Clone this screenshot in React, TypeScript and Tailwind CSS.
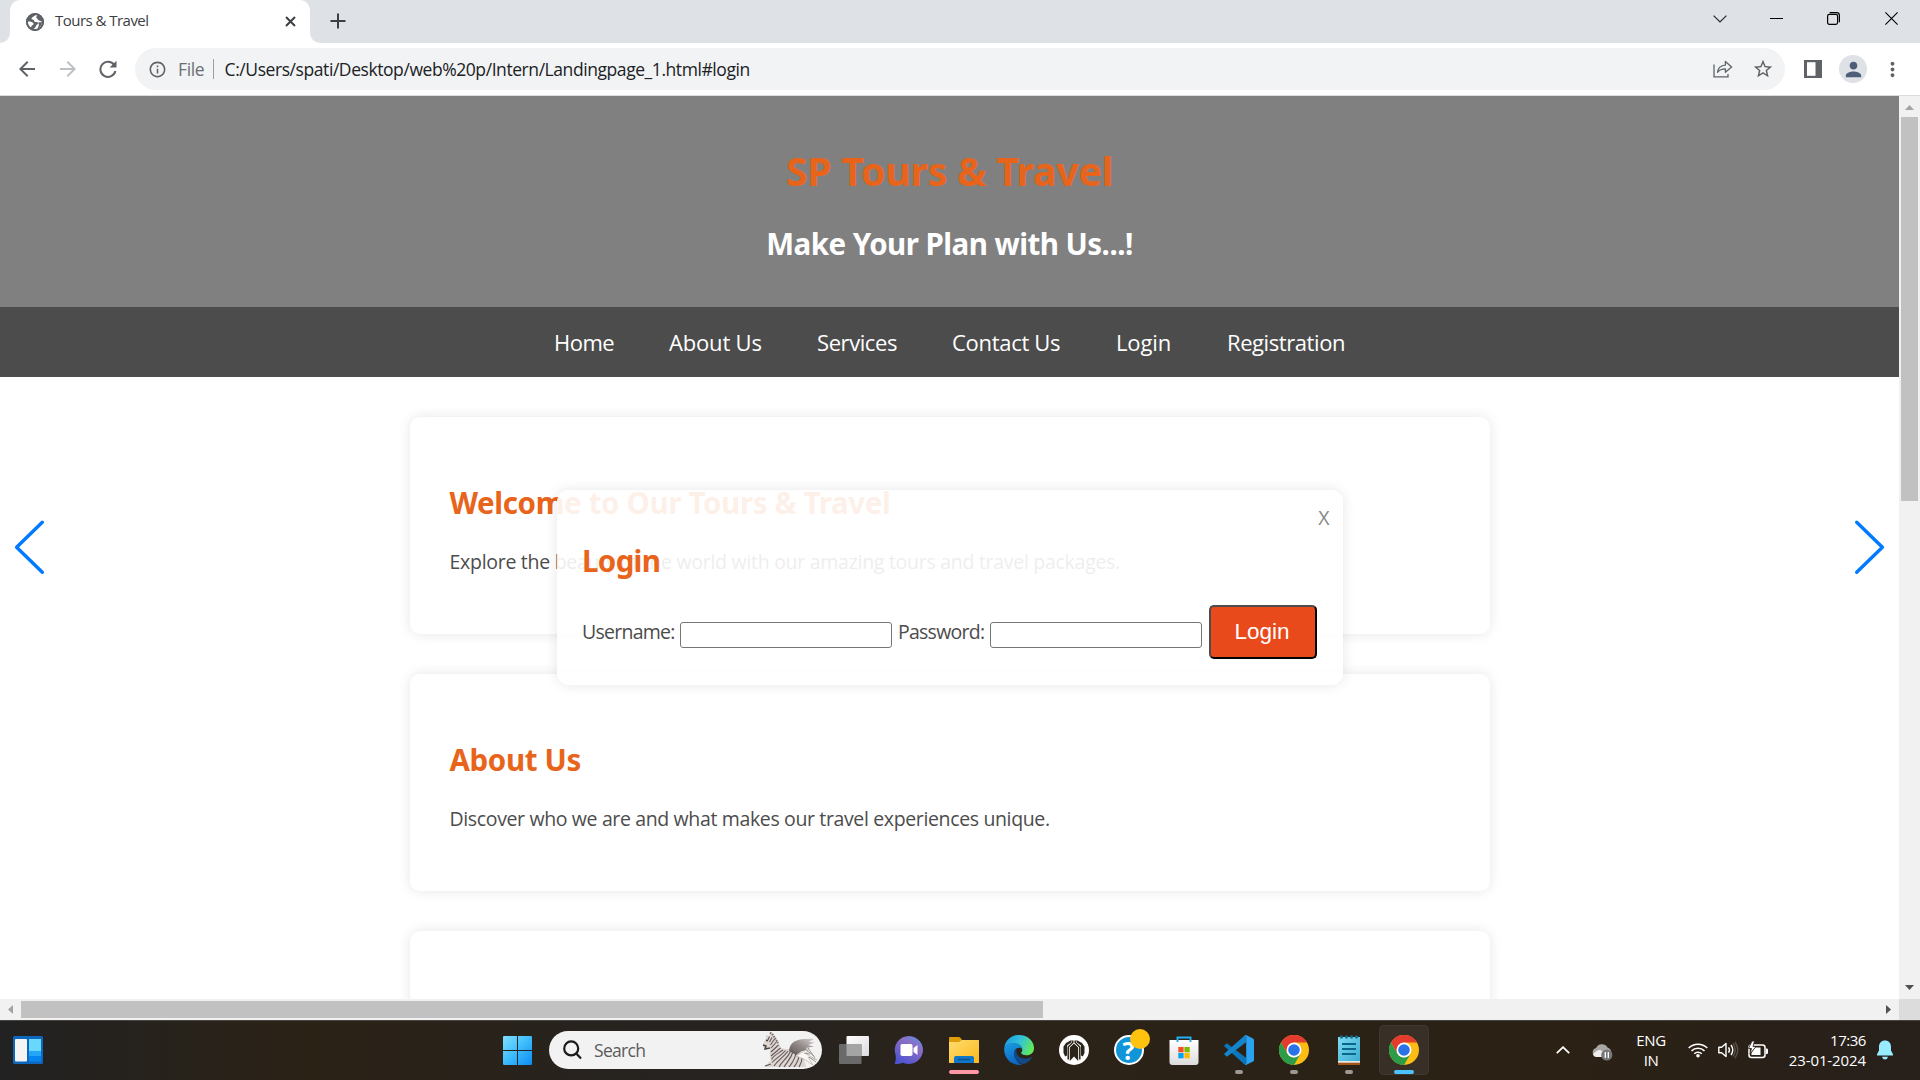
import React from 'react';
import { MdArrowBack, MdArrowForward, MdInfoOutline, MdStarBorder, MdPerson, MdMoreVert } from 'react-icons/md';

function GlobeIcon() {
  return (
    <svg width="18" height="18" viewBox="0 0 18 18">
      <circle cx="9" cy="9" r="9" fill="#5f6368" />
      <path d="M10.5 2C8.5 2.6 7.6 3.4 6.3 4.3C5.2 5.2 5.2 6.6 6.6 6.6C8 6.6 8 7.4 8.1 8C8.3 9 9.4 9 10.6 8.9C11.9 8.9 12.2 9.8 12 10.6C11.6 12 10.2 11.7 10 13C9.8 14.2 9 15 7.4 16L9.6 16.2C13.4 16 16.2 12.8 16.2 9C15 8.4 14 7.9 13 7.6C11.6 7.2 11.9 5.8 10.9 5.3C9.8 4.8 9.9 3.6 11.3 3.1Z" fill="#fff" />
      <path d="M1.8 8.6C3.8 8.5 6 9 7 9.8C8 10.6 7.6 12 6.4 12.2C5.4 12.4 5.4 13.6 5 14.6C2.9 13.3 1.7 11.3 1.8 8.6Z" fill="#fff" />
      <path d="M12.2 9.4C13.2 8.8 14.7 9.6 16.2 9C15.8 12 14 14.5 11.5 15.5C11.7 13.8 13.2 13.2 12.9 11.7Z" fill="#5f6368" />
      <circle cx="9" cy="9" r="8.1" fill="none" stroke="#5f6368" strokeWidth="1.8" />
    </svg>
  );
}

function TabStrip() {
  return (
    <div className="flex h-[43px] shrink-0 bg-[#dee1e6]">
      <div className="flex w-[10px] flex-col justify-end bg-white">
        <div className="h-full w-full rounded-br-[10px] bg-[#dee1e6]" />
      </div>
      <div className="bg-[#dee1e6]">
        <div className="flex h-[43px] w-[300px] items-center rounded-t-[10px] bg-white pr-[14.5px] pl-[16px]">
          <GlobeIcon />
          <span className="mt-[-2px] ml-[11px] flex-1 text-[15px] tracking-[-0.53px] text-[#3c4043]">Tours &amp; Travel</span>
          <svg width="11" height="11" viewBox="0 0 11 11" stroke="#3c4043" strokeWidth="2"><path d="M1 1L10 10M10 1L1 10" /></svg>
        </div>
      </div>
      <div className="w-[10px] bg-white"><div className="h-full rounded-bl-[10px] bg-[#dee1e6]" /></div>
      <svg className="mt-[13px] ml-[9.5px]" width="16" height="16" viewBox="0 0 16 16" stroke="#3c4043" strokeWidth="2"><path d="M8 0.5V15.5M0.5 8H15.5" /></svg>
      <svg className="mt-[15px] ml-auto" width="14" height="8" viewBox="0 0 14 8" fill="none" stroke="#222" strokeWidth="1.1"><path d="M0.6 0.6L7 7L13.4 0.6" /></svg>
      <svg className="mt-[18px] ml-[43px]" width="13" height="1" viewBox="0 0 13 1"><rect width="13" height="1" fill="#000" /></svg>
      <svg className="mt-[12px] ml-[44px]" width="13" height="13" viewBox="0 0 13 13" fill="none" stroke="#000" strokeWidth="1.2"><rect x="0.6" y="2.4" width="10" height="10" rx="1.8" /><path d="M2.6 0.6H9.6Q12.4 0.6 12.4 3.4V10.2" /></svg>
      <svg className="mt-[12px] mr-[22px] ml-[45px]" width="13" height="13" viewBox="0 0 13 13" stroke="#000" strokeWidth="1.1"><path d="M0.4 0.4L12.6 12.6M12.6 0.4L0.4 12.6" /></svg>
    </div>
  );
}

function Toolbar() {
  return (
    <div className="flex h-[53px] shrink-0 items-center border-b border-[#dadce0] bg-white">
      <MdArrowBack className="ml-[15px] size-6 text-[#5f6368]" />
      <MdArrowForward className="ml-[17px] size-6 text-[#bdc1c6]" />
      <svg className="ml-[19px]" width="18" height="18" viewBox="0 0 18 18"><path d="M15.2 4.9A7.6 7.6 0 1 0 16.4 11" fill="none" stroke="#5f6368" strokeWidth="2" /><path d="M17.5 0.8V7.6H10.6Z" fill="#5f6368" /></svg>
      <div className="ml-[18px] flex h-[42px] w-[1650px] items-center rounded-full bg-[#f1f3f4] pl-[13px]">
        <MdInfoOutline className="size-[19px] text-[#5f6368]" />
        <span className="ml-[11px] text-[17.5px] tracking-[-0.4px] text-[#6b6f74]">File</span>
        <div className="ml-[8.5px] h-[20px] w-[1.5px] bg-[#9aa0a6]" />
        <span className="ml-[10.5px] text-[17.5px] tracking-[-0.43px] text-[#202124]">C:/Users/spati/Desktop/web%20p/Intern/Landingpage_1.html#login</span>
        <svg className="ml-auto" width="20" height="18" viewBox="0 0 20 18" fill="none" stroke="#5f6368" strokeWidth="1.3"><path d="M1 4.5V16.8H15V14" /><path d="M4.5 12.3C5 8 7.6 5.4 12.4 5.1V1.5L18.6 7L12.4 12.3V8.8C8.8 8.7 6.5 9.8 4.5 12.3Z" strokeLinejoin="round" /></svg>
        <MdStarBorder className="mr-[11px] ml-[19px] size-[22px] text-[#5f6368]" />
      </div>
      <svg className="ml-[18.5px]" width="18" height="18" viewBox="0 0 18 18"><rect width="18" height="18" fill="#5f6368" /><rect x="3" y="2.2" width="8.5" height="13.6" fill="#fff" /></svg>
      <div className="ml-[17.5px] flex size-[28px] items-center justify-center rounded-full bg-[#dee1e6]"><MdPerson className="size-[23px] text-[#4e5d78]" /></div>
      <MdMoreVert className="ml-[14px] size-[23px] text-[#5f6368]" />
    </div>
  );
}

const navItems = [
  { label: 'Home', cls: 'w-[60px] tracking-[-0.5px]' },
  { label: 'About Us', cls: 'w-[93px] tracking-[-0.18px]' },
  { label: 'Services', cls: 'w-[80px] tracking-[-0.42px]' },
  { label: 'Contact Us', cls: 'w-[109px] tracking-[-0.3px]' },
  { label: 'Login', cls: 'w-[56px] tracking-[-0.14px]' },
  { label: 'Registration', cls: 'w-[118px] tracking-[-0.42px]' },
];

function Card({ title, text, titleCls, textCls }: { title?: string; text?: string; titleCls?: string; textCls?: string }) {
  return (
    <section className="h-[217px] w-[1080px] shrink-0 rounded-[10px] bg-white px-[40px] pt-[66px] shadow-[0_0_13px_rgba(0,0,0,0.1)]">
      <h2 className={`h-[40px] font-['Noto_Sans'] text-[29.5px] leading-[40px] font-bold whitespace-nowrap text-[#e8641b] ${titleCls}`}>{title}</h2>
      <p className={`mt-[25px] h-[27px] text-[19.5px] leading-[27px] whitespace-nowrap text-[#4c4c4c] ${textCls}`}>{text}</p>
    </section>
  );
}

function LoginDialog() {
  return (
    <div className="absolute top-[394px] left-[557px] h-[195px] w-[786px] rounded-[12px] bg-white/90 px-[25px] text-[19.5px] text-[#4c4c4c] shadow-[0_0_13px_rgba(0,0,0,0.1)]">
      <div className="flex h-[51px] items-start justify-end pt-[14px] leading-[27px] text-[#888]"><span className="mr-[-11.5px]">X</span></div>
      <h2 className="h-[40px] font-['Noto_Sans'] text-[29.5px] leading-[40px] font-bold tracking-[-0.65px] text-[#e8641b]">Login</h2>
      <div className="mt-[24px] flex h-[54px] items-center">
        <span className="w-[93px] tracking-[-0.75px]">Username:</span>
        <div className="mt-[6px] ml-[5px] h-[26px] w-[212px] rounded-[3px] border border-[#767676] bg-white" />
        <span className="ml-[6px] w-[87px] tracking-[-0.75px]">Password:</span>
        <div className="mt-[6px] ml-[5px] h-[26px] w-[212px] rounded-[3px] border border-[#767676] bg-white" />
        <div className="ml-[7px] flex h-[54px] w-[108px] shrink-0 items-center justify-center rounded-[5px] border-2 border-t-[#4d4d4d] border-r-black border-b-black border-l-[#4d4d4d] bg-[#e84a1b] pr-[2px] font-['Liberation_Sans'] text-[22.5px] text-white">Login</div>
      </div>
    </div>
  );
}

function SiteContent() {
  return (
    <main className="relative h-[903px] w-[1899px] overflow-hidden bg-white">
      <header className="h-[211px] bg-[#808080] pt-[49px] text-center font-['Noto_Sans'] font-bold">
        <h1 className="h-[53px] text-[39.5px] leading-[53px] tracking-[-0.4px] text-[#e8641b]">SP Tours &amp; Travel</h1>
        <h2 className="mt-[26px] h-[40px] text-[29.5px] leading-[40px] tracking-[-0.53px] text-white">Make Your Plan with Us...!</h2>
      </header>
      <nav className="flex h-[70px] justify-center gap-[55px] bg-[#4c4c4c] pt-[20px] text-[22px] leading-[31px] text-white">
        {navItems.map((n) => <a key={n.label} className={`whitespace-nowrap ${n.cls}`}>{n.label}</a>)}
      </nav>
      <div className="flex flex-col items-center gap-[40px] pt-[40px]">
        <Card title="Welcome to Our Tours & Travel" text="Explore the beauty of the world with our amazing tours and travel packages." titleCls="tracking-[-0.36px]" textCls="tracking-[-0.28px]" />
        <Card title="About Us" text="Discover who we are and what makes our travel experiences unique." titleCls="tracking-[-0.35px]" textCls="tracking-[-0.36px]" />
        <Card />
      </div>
      <svg className="absolute top-[423px] left-[14px]" width="32" height="56" viewBox="0 0 32 56" fill="none" stroke="#007aff" strokeWidth="3.4" strokeLinecap="round" strokeLinejoin="round"><path d="M28.3 3.2L2.6 28.2L28.3 53.2" /></svg>
      <svg className="absolute top-[423px] left-[1853px]" width="32" height="56" viewBox="0 0 32 56" fill="none" stroke="#007aff" strokeWidth="3.4" strokeLinecap="round" strokeLinejoin="round"><path d="M3.7 3.2L29.4 28.2L3.7 53.2" /></svg>
      <LoginDialog />
    </main>
  );
}

function ZebraArt() {
  return (
    <svg width="60" height="38" viewBox="0 0 60 38">
      <defs>
        <linearGradient id="wing" x1="1" y1="0" x2="0" y2="1"><stop offset="0" stopColor="#d8d2ce" /><stop offset="0.45" stopColor="#978e8e" /><stop offset="1" stopColor="#5c5455" /></linearGradient>
        <clipPath id="pill"><path d="M0 0H41A19 19 0 0 1 41 38H0Z" /></clipPath>
      </defs>
      <g clipPath="url(#pill)">
        <path d="M1 13L4 7L4 4L7 5L8 2L12 5C15 7 17 11 19 17C25 19 31 17 36 21C41 25 43 30 44 36H2L9 29C7 25 8 20 8 16L3 18L1 16Z" fill="#ded6d1" />
        <path d="M27 20C28 11 34 7 52 8L47 11L53 11.500L46 14L52 15.500L44 17L46 19.500L40 20L34 24Z" fill="url(#wing)" />
        <path d="M7.500 5.500L6 9M10 6.500L7.500 11M12.500 8L8.500 14M14.500 11L9 17M16.500 14L9 21M18.500 17L9 25M21 19C17 22 12 24 9.500 28.500M23.500 19.500C19 25 14 27 10 31.500M26 20C21 27 16 29 12 35M28.500 20C26 27 20 30 17 36M31 20.500C29 28 25 31 22 36M34 21.500C33 29 30 32 27 36M37 23.500C37 30 34 33 32 36M40 27C40 31 38 34 37 36M3 35L9 33" stroke="#62575a" strokeWidth="1.1" fill="none" />
        <path d="M1 14L4 15L3 18L8 17" stroke="#4c4341" strokeWidth="1.5" fill="none" />
        <path d="M8 1.500L11 4L13.500 8L16 12" stroke="#75675f" strokeWidth="2" strokeDasharray="1.500 1" fill="none" />
        <circle cx="5" cy="9.500" r="0.900" fill="#2c2422" />
        <path d="M34 25L47 17L44 23L55 29L46 26L51 34L42 28Z" fill="#fbf7f5" stroke="#b5aca7" strokeWidth="0.700" />
        <path d="M43 18L52 25M46 17L53 27M42 22L48 23M47 26L54 31" stroke="#958b87" strokeWidth="0.900" />
      </g>
    </svg>
  );
}

function ChromeIcon() {
  return (
    <svg width="30" height="30" viewBox="0 0 30 30">
      <circle cx="15" cy="15" r="15" fill="#fbbc14" />
      <path d="M2 7.5A15 15 0 0 1 28 7.5H15L8.5 18.7Z" fill="#e33b2e" />
      <path d="M2 7.5L8.5 18.8A7.5 7.5 0 0 0 15 22.5L21.5 18.7L15 30A15 15 0 0 1 2 7.5Z" fill="#2c9c48" />
      <circle cx="15" cy="15" r="7.5" fill="#fff" />
      <circle cx="15" cy="15" r="5.8" fill="#2a72e8" />
    </svg>
  );
}

function StartIcon() {
  return (
    <svg width="29" height="29" viewBox="0 0 29 29">
      <defs><linearGradient id="win" x1="0" y1="0" x2="1" y2="1"><stop stopColor="#80e0ff" /><stop offset="0.5" stopColor="#3cbcfc" /><stop offset="1" stopColor="#0d8bf5" /></linearGradient></defs>
      <path d="M0.8 0H14V14H0V0.8ZM15 0H28.2L29 0.8V14H15ZM0 15H14V29H0.8L0 28.2ZM15 15H29V28.2L28.2 29H15Z" fill="url(#win)" />
    </svg>
  );
}

function TaskViewIcon() {
  return (
    <svg width="30" height="28" viewBox="0 0 30 28">
      <defs><linearGradient id="tv" x1="0" y1="0" x2="1" y2="1"><stop stopColor="#fff" /><stop offset="1" stopColor="#dcdcdc" /></linearGradient></defs>
      <rect x="7.5" y="0" width="22.5" height="20" rx="1" fill="url(#tv)" />
      <rect x="0" y="8" width="22.5" height="20" rx="1" fill="#6a6a6a" />
      <path d="M7.5 8H22.5V20H7.5Z" fill="#a4a4a4" />
    </svg>
  );
}

function ChatIcon() {
  return (
    <svg width="30" height="30" viewBox="0 0 30 30">
      <defs><linearGradient id="chat" x1="0.9" y1="0" x2="0.3" y2="1"><stop stopColor="#5d8fe8" /><stop offset="0.35" stopColor="#8a6fc4" /><stop offset="1" stopColor="#5053d0" /></linearGradient></defs>
      <path d="M15 1A14.2 14 0 1 1 9 27.8C7 28.6 4 29 0.6 29C1.6 26.7 2 24 1.7 20A14.2 14 0 0 1 15 1Z" fill="url(#chat)" />
      <rect x="6.5" y="9" width="12" height="12" rx="1.8" fill="#fff" /><path d="M19.5 13L23.5 10V20L19.5 17Z" fill="#fff" />
    </svg>
  );
}

function ExplorerIcon() {
  return (
    <svg width="30" height="28" viewBox="0 0 30 28">
      <defs><linearGradient id="fold" x1="0" y1="0" x2="1" y2="1"><stop stopColor="#ffdc70" /><stop offset="1" stopColor="#fbb91c" /></linearGradient></defs>
      <path d="M0 2Q0 1 1 1H10Q11 1 12 2.5L13 4H29Q30 4 30 5V16H0Z" fill="#e09d0a" />
      <path d="M0 6H10L13 4H29Q30 4 30 5V27H0Z" fill="url(#fold)" />
      <path d="M5 27V22Q5 20 7 20H23Q25 20 25 22V27Z" fill="#0f77c9" /><path d="M9 23.5H21" stroke="#075192" strokeWidth="1.5" />
    </svg>
  );
}

function EdgeIcon() {
  return (
    <svg width="30" height="30" viewBox="0 0 30 30">
      <defs>
        <linearGradient id="e1" x1="0" y1="0.3" x2="1" y2="0.6"><stop stopColor="#1b9de2" /><stop offset="0.5" stopColor="#33c3d8" /><stop offset="1" stopColor="#66eb52" /></linearGradient>
        <linearGradient id="e2" x1="0" y1="0" x2="0.3" y2="1"><stop stopColor="#1b9de2" /><stop offset="1" stopColor="#0b67c4" /></linearGradient>
      </defs>
      <path d="M0.3 12.5C1.3 5 7.5 0 15 0C24 0 30 6.3 30 13C30 17.8 26.5 20.3 22.5 20.3C19.3 20.3 17.2 19.2 17.2 17.8C17.2 17 18.3 16.5 18.3 14.7C18.3 11 14 8.2 9.5 8.2C5.5 8.2 2.2 10 0.3 12.5Z" fill="url(#e1)" />
      <path d="M0.3 12.5C2.2 9.5 5.5 8 9.3 8C14 8 17.8 10.7 18.3 14C16.5 12.4 14.2 12.5 12.5 13.6C9.5 16 9.3 20 11.8 24C13.2 27 15.5 29.3 18.2 29.7C8 31.5 -1 23.5 0.3 12.5Z" fill="url(#e2)" />
      <path d="M12.5 13.6C9 16 9.3 20.5 11.8 24.5C15 29 19.5 31 25 26C27 24.4 27.8 23 28 21.7C22 25.5 13.5 24 12.4 17.3C12.2 16 12.2 14.8 12.5 13.6Z" fill="#114a8b" />
    </svg>
  );
}

function TunnelIcon() {
  return (
    <svg width="30" height="30" viewBox="0 0 30 30">
      <circle cx="15" cy="15" r="15" fill="#fff" />
      <path d="M6.2 21.500L4.500 18V11.500L7 8L12.500 5V7.200L8 10.500V20.500ZM23.800 21.500L25.500 18V11.500L23 8L17.500 5V7.200L22 10.500V20.500Z" fill="#2b2419" />
      <path d="M9.200 24.500V12L13.800 7.500V5.500M20.800 24.500V12L16.200 7.500V5.500" fill="none" stroke="#2b2419" strokeWidth="1.500" />
      <path d="M10.800 26V12.500L15 8.500L19.200 12.500V26L15 21.500Z" fill="#2b2419" /><path d="M12 22.800V13L15 10.200L18 13V22.800L15 19.800Z" fill="#2b2419" />
    </svg>
  );
}

function HelpIcon() {
  return (
    <div className="relative size-[30px]">
      <div className="flex size-[30px] items-center justify-center rounded-full border-2 border-white bg-[#0f95d8] text-[25px] leading-none font-bold text-white">?</div>
      <div className="absolute top-[-6px] left-[16px] size-[20px] rounded-full bg-[#ffc20e]" />
    </div>
  );
}

function StoreIcon() {
  return (
    <svg width="30" height="30" viewBox="0 0 30 30">
      <defs><linearGradient id="bag" x1="0" y1="0" x2="0" y2="1"><stop stopColor="#fff" /><stop offset="1" stopColor="#dcdcdc" /></linearGradient></defs>
      <path d="M0.5 5H29.5V27Q29.5 30 26.5 30H3.5Q0.5 30 0.5 27Z" fill="url(#bag)" />
      <rect x="9.3" y="12" width="5.3" height="5.3" fill="#f25022" /><rect x="15.4" y="12" width="5.3" height="5.3" fill="#7fba00" />
      <rect x="9.3" y="18" width="5.3" height="5.3" fill="#00a4ef" /><rect x="15.4" y="18" width="5.3" height="5.3" fill="#ffb900" />
      <path d="M8.5 7V2.5H21.5V7" fill="none" stroke="#23aef0" strokeWidth="2" />
    </svg>
  );
}

function CodeIcon() {
  return (
    <svg width="30" height="30" viewBox="0 0 30 30">
      <path d="M0.4 10.6L2.5 8.6Q3 8.3 3.6 8.7L22 22.8V30Q21 30 20.3 29.3L0.5 11.6Q0 11 0.4 10.6Z" fill="#0b76bc" />
      <path d="M0.4 19.4L2.5 21.4Q3 21.7 3.6 21.3L22 7.2V0Q21 0 20.3 0.7L0.5 18.4Q0 19 0.4 19.4Z" fill="#1484cc" />
      <path d="M22 0L29 3.4Q30 4 30 5V25Q30 26 29 26.6L22 30Q21 30 20.3 29.3Q22.2 30.3 22.2 28V2Q22.2 -0.2 20.3 0.7Q21 -0.1 22 0Z" fill="#2aa3f0" />
    </svg>
  );
}

function NotepadIcon() {
  return (
    <svg width="22" height="30" viewBox="0 0 22 30">
      <defs><linearGradient id="np" x1="0" y1="0" x2="1" y2="1"><stop stopColor="#7fdcf2" /><stop offset="1" stopColor="#3bacd0" /></linearGradient></defs>
      <rect y="27" width="22" height="3" fill="#a4541a" /><rect y="25.5" width="22" height="2.2" fill="#e8e8e8" />
      <rect y="2" width="22" height="24" fill="url(#np)" />
      <path d="M4 9H18M4 14H18M4 19H18" stroke="#0b668c" strokeWidth="1.8" />
      <path d="M3.5 0.5V3.5M8.5 0.5V3.5M13.5 0.5V3.5M18.5 0.5V3.5" stroke="#146c8f" strokeWidth="2.6" />
    </svg>
  );
}

const apps: { icon: React.ReactNode; mark?: string; active?: boolean }[] = [
  { icon: <TaskViewIcon /> },
  { icon: <ChatIcon /> },
  { icon: <ExplorerIcon />, mark: 'w-[30px] bg-[#ff99a4]' },
  { icon: <EdgeIcon /> },
  { icon: <TunnelIcon /> },
  { icon: <HelpIcon /> },
  { icon: <StoreIcon /> },
  { icon: <CodeIcon />, mark: 'w-[8px] bg-[#9c9894]' },
  { icon: <ChromeIcon />, mark: 'w-[8px] bg-[#9c9894]' },
  { icon: <NotepadIcon />, mark: 'w-[8px] bg-[#9c9894]' },
  { icon: <ChromeIcon />, mark: 'w-[20px] bg-[#4cc2ff]', active: true },
];

function Taskbar() {
  return (
    <footer className="flex h-[60px] items-center border-t border-[#474541] bg-[linear-gradient(90deg,#222222_0%,#2b2216_16%,#262321_36%,#2b2318_55%,#2b2115_82%,#27201b_100%)] pb-px text-[15px] text-white">
      <svg className="ml-[13px]" width="30" height="28" viewBox="0 0 30 28"><rect width="30" height="28" rx="1.5" fill="#0c67bd" /><rect x="2" y="3" width="12" height="22.5" rx="1" fill="#f4f4f4" /><rect x="16" y="3" width="12" height="12" fill="#68d8ff" /><rect x="16" y="15" width="12" height="5" fill="#22a7f7" /><rect x="16" y="20" width="12" height="5.5" fill="#0586ee" /></svg>
      <div className="ml-[460px]"><StartIcon /></div>
      <div className="ml-[17px] flex h-[38px] w-[273px] items-center rounded-full bg-[#f2f2f2] pl-[14px]">
        <svg width="19" height="20" viewBox="0 0 19 20" fill="none" stroke="#1b1b1b" strokeWidth="2.2"><circle cx="8.2" cy="8.4" r="7" /><path d="M13.2 13.4L18 18.6" /></svg>
        <span className="ml-[12px] text-[17.5px] tracking-[-0.7px] text-[#5c5c5c]">Search</span>
        <div className="ml-auto"><ZebraArt /></div>
      </div>
      <div className="ml-[4px] flex">
        {apps.map((a, i) => (
          <div key={i} className="flex w-[55px] justify-center">
            <div className={`relative flex h-[50px] w-[50px] items-center justify-center rounded-[5px] ${a.active ? 'bg-[#383027] ring-1 ring-[#403830] ring-inset' : ''}`}>
              {a.icon}
              {a.mark && <div className="absolute inset-x-0 bottom-[1px] flex justify-center"><div className={`h-[4px] rounded-full ${a.mark}`} /></div>}
            </div>
          </div>
        ))}
      </div>
      <svg className="ml-[125px]" width="14" height="8" viewBox="0 0 14 8" fill="none" stroke="#fff" strokeWidth="1.8"><path d="M0.8 7.2L7 1.2L13.2 7.2" /></svg>
      <svg className="mt-[4px] ml-[22px]" width="21" height="18" viewBox="0 0 21 18"><path d="M5 14A4.6 4.6 0 0 1 4 5A6.5 6.5 0 0 1 15.5 4.5A5 5 0 0 1 19 11L12 14Z" fill="#aaa6a2" /><path d="M1 11.5Q4 7 8 7L14 10L12 14H5Q2 14 1 11.5Z" fill="#f0efee" /><circle cx="14.8" cy="12" r="5.6" fill="#77777b" /><path d="M13.3 9V15M16.3 9V15" stroke="#fff" strokeWidth="1.3" /></svg>
      <div className="ml-[22px] w-[32px] text-center leading-[20px] tracking-[-0.4px]">ENG<br />IN</div>
      <svg className="ml-[21px]" width="20" height="16" viewBox="0 0 20 16" fill="none" stroke="#fff" strokeWidth="1.5"><path d="M0.7 6A13.2 13.2 0 0 1 19.3 6M3.5 8.9A9.2 9.2 0 0 1 16.5 8.9M6.2 11.7A5.4 5.4 0 0 1 13.8 11.7" /><circle cx="10" cy="13.8" r="1.8" fill="#fff" stroke="none" /></svg>
      <svg className="ml-[10px]" width="21" height="18" viewBox="0 0 21 18" fill="none" stroke="#fff" strokeWidth="1.4"><path d="M0.8 6.3H3.6L8 2.5V15.5L3.6 11.7H0.8Z" strokeLinejoin="round" /><path d="M10.5 6.3Q12.5 9 10.5 11.7M13 4Q16.5 9 13 14" /><path d="M15 2.5Q19.5 9 15 15.5M17 1Q22.5 9 17 17" stroke="#57504a" /></svg>
      <svg className="ml-[9px]" width="20" height="18" viewBox="0 0 20 18"><rect x="1" y="4" width="16" height="12.5" rx="2.5" fill="none" stroke="#fff" strokeWidth="1.5" /><path d="M18 7.5H19Q20 7.5 20 9V11.5Q20 13 19 13H18Z" fill="#fff" /><path d="M7 6.5H12.5V14H3.5V12Z" fill="#fff" /><path d="M4 0L0.5 7.5H3.5L2 13L8 5.5H5L6.5 0Z" fill="#fff" stroke="#2b2115" strokeWidth="0.8" /></svg>
      <div className="mb-[1px] ml-auto text-right leading-[20px] whitespace-nowrap"><div className="tracking-[-0.45px]">17:36</div><div className="tracking-[-0.1px]">23-01-2024</div></div>
      <svg className="mr-[27px] ml-[11px]" width="16" height="20" viewBox="0 0 16 20" fill="#98ecff"><path d="M8 0.5C4.3 0.5 2 3.2 2 6.8V10.5L0 14.2V15.5H16V14.2L14 10.5V6.8C14 3.2 11.7 0.5 8 0.5ZM5 16.8H11Q10.5 19.5 8 19.5T5 16.8Z" /></svg>
    </footer>
  );
}

export default function App() {
  return (
    <div className="flex h-[1080px] w-[1920px] flex-col overflow-hidden font-['Open_Sans',sans-serif]">
      <TabStrip />
      <Toolbar />
      <div className="flex h-[903px]">
        <SiteContent />
        <div className="flex w-[21px] flex-col items-center bg-[#f1f1f1]">
          <svg className="mt-[9px]" width="9" height="5" viewBox="0 0 9 5"><path d="M4.5 0L9 5H0Z" fill="#a3a3a3" /></svg>
          <div className="mt-[7px] h-[384px] w-[17px] bg-[#c1c1c1]" />
          <svg className="mt-auto mb-[9px]" width="9" height="5" viewBox="0 0 9 5"><path d="M0 0H9L4.5 5Z" fill="#505050" /></svg>
        </div>
      </div>
      <div className="flex h-[21px] items-center bg-[#f1f1f1]">
        <svg className="ml-[8px]" width="5" height="9" viewBox="0 0 5 9"><path d="M5 0V9L0 4.5Z" fill="#a3a3a3" /></svg>
        <div className="ml-[8px] h-[17px] w-[1022px] bg-[#c1c1c1]" />
        <svg className="mr-[8px] ml-auto" width="5" height="9" viewBox="0 0 5 9"><path d="M0 0V9L5 4.5Z" fill="#505050" /></svg>
        <div className="h-[21px] w-[21px] bg-[#dcdcdc]" />
      </div>
      <Taskbar />
    </div>
  );
}
